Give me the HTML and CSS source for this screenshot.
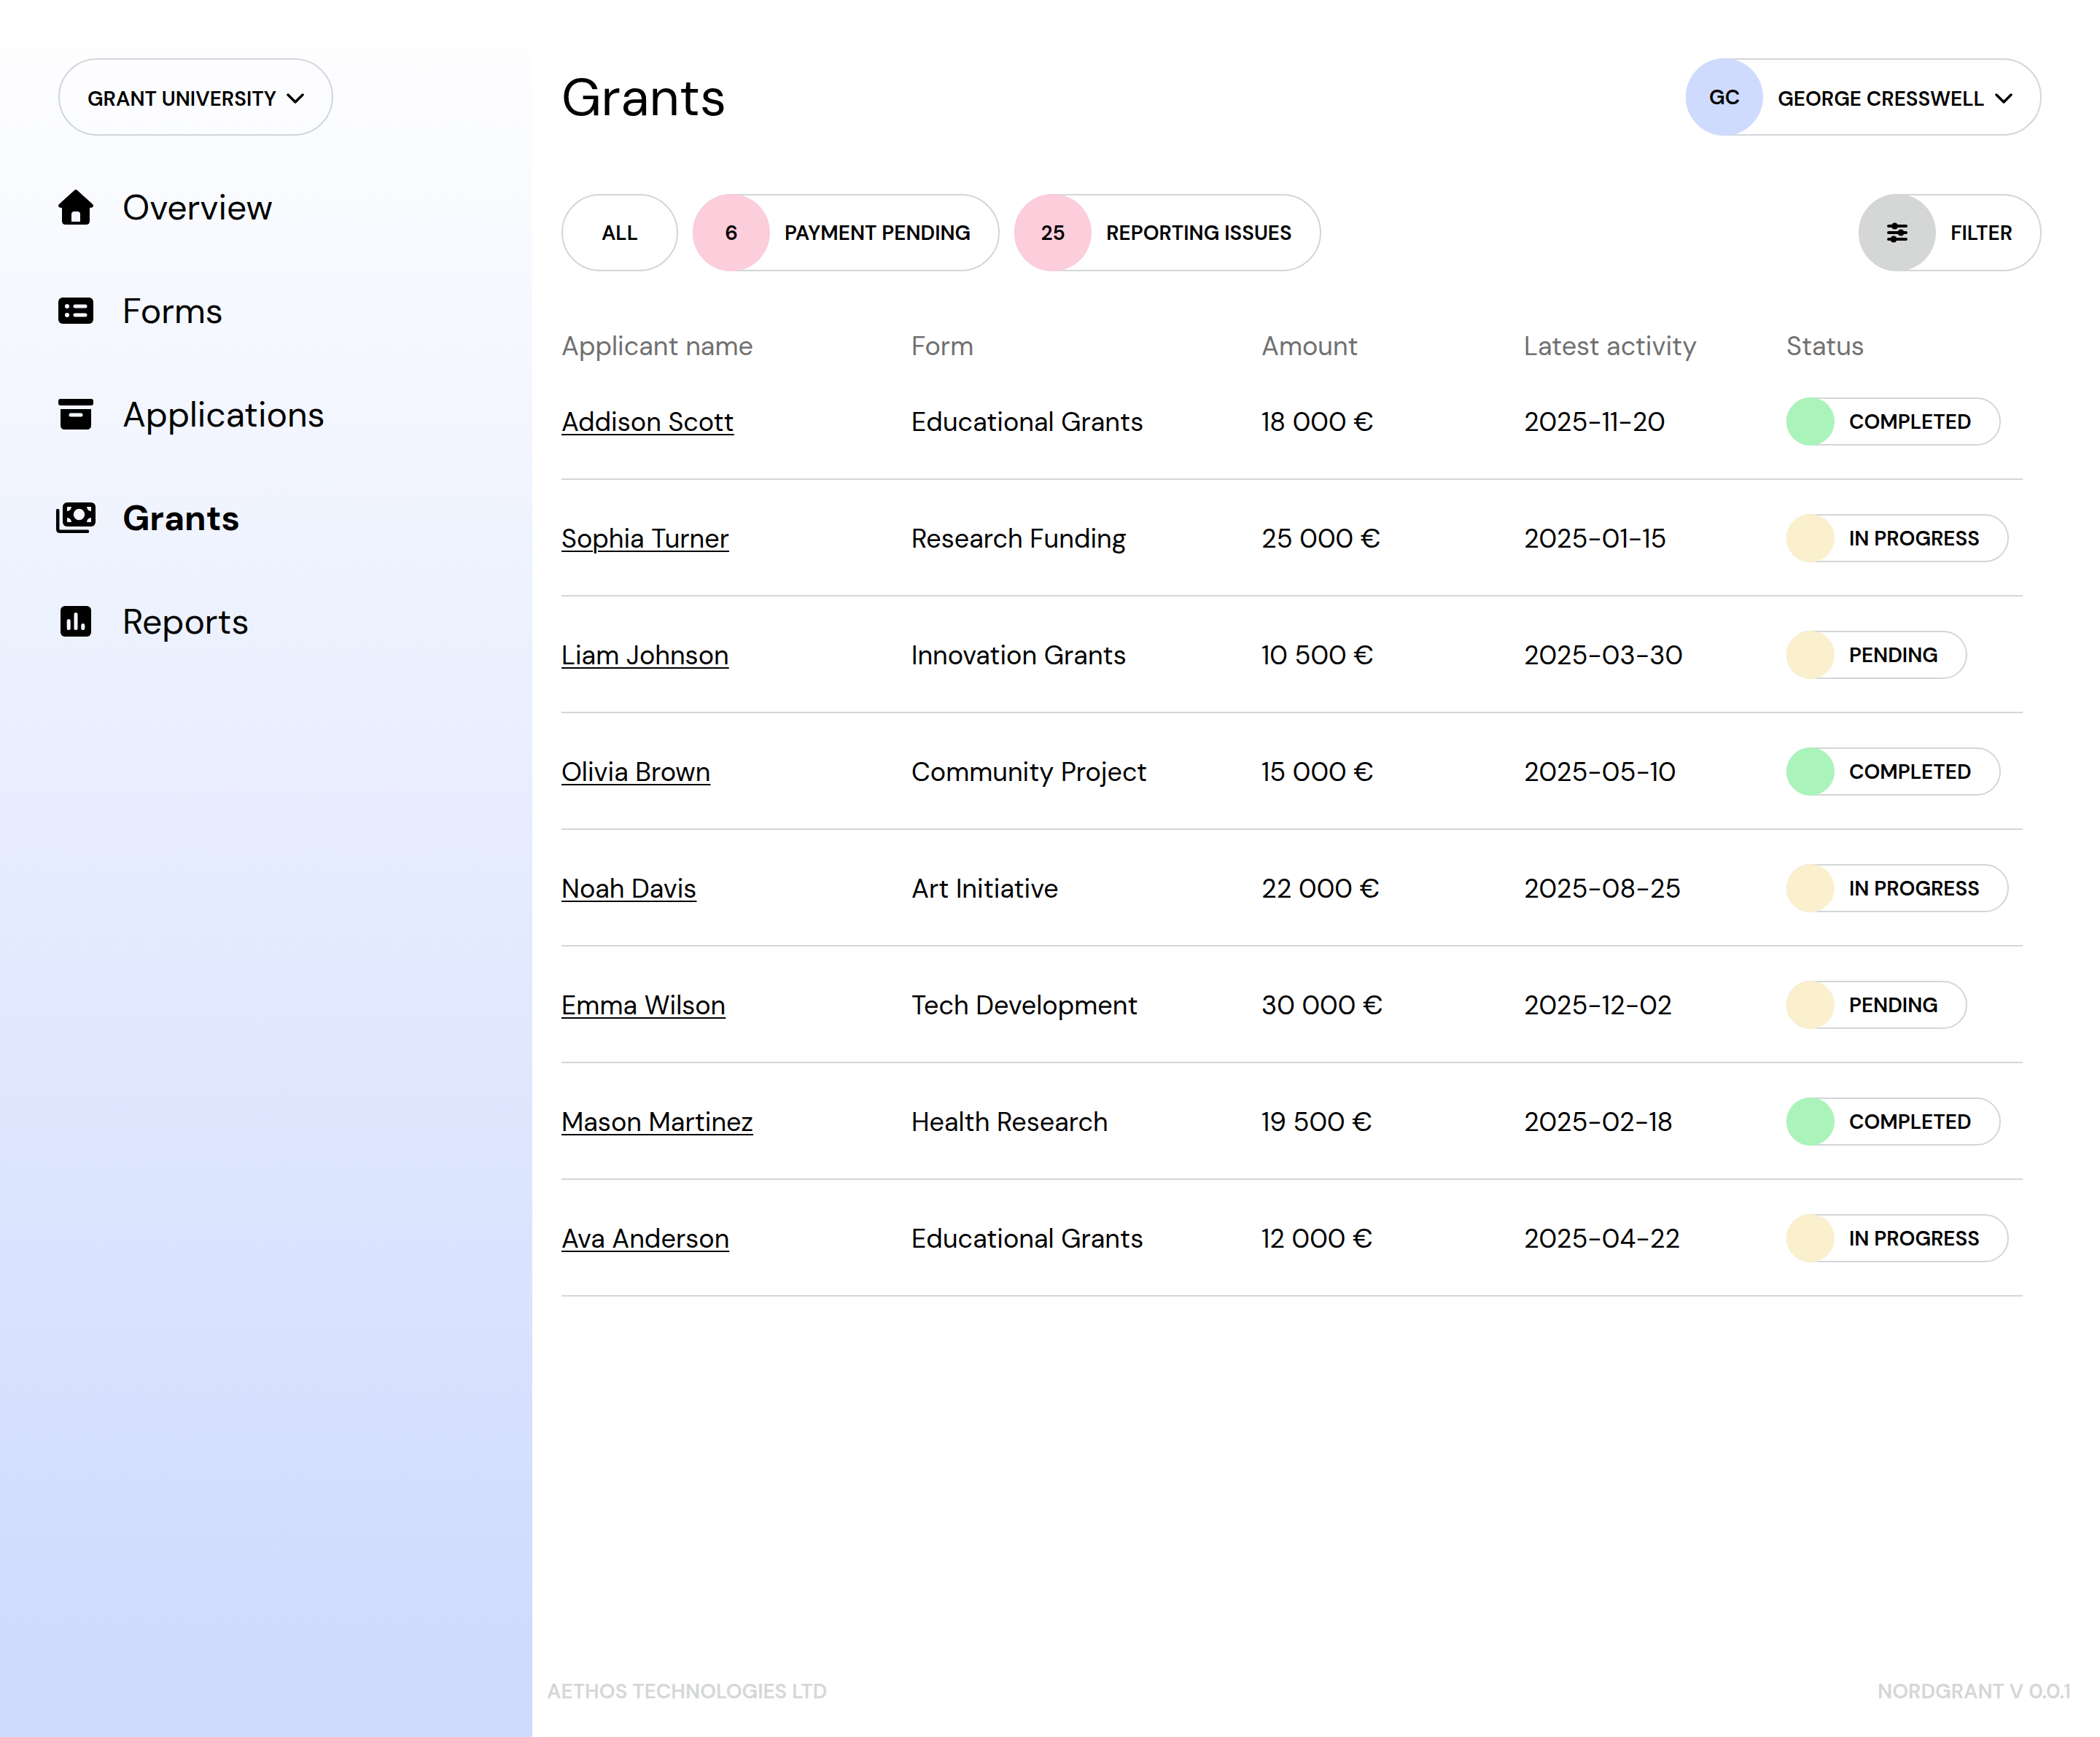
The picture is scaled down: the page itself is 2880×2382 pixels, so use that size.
FILE: index.html
```
<!DOCTYPE html>
<html lang="en">
<head>
    <meta charset="UTF-8">
    <meta name="viewport" content="width=device-width, initial-scale=1.0">
    <title>Grants</title>
    <link rel="stylesheet" href="styles.css">
</head>
<body>
    <div class="app">
        <aside class="sidebar">
            <label class="pill pill-menu">
                <select aria-label="Organisation">
                    <option>GRANT UNIVERSITY</option>
                </select>
                <svg class="chevron" viewBox="0 0 24 14"><path d="M2 2l10 10L22 2"/></svg>
            </label>
            <nav class="nav">
                <a href="#">
                    <svg class="icon" viewBox="0 0 48 48">
                        <path d="M22 1Q24-1 26 1L47 20Q49 22 47 24Q46 25 43 25V43Q43 48 38 48H10Q5 48 5 43V25Q2 25 1 24Q-1 22 1 20Z"/>
                        <path class="cut" d="M18 44V34Q18 30 22 30H26Q30 30 30 34V44Z"/>
                    </svg>
                    Overview
                </a>
                <a href="#">
                    <svg class="icon" viewBox="0 0 48 48">
                        <rect y="6" width="48" height="36" rx="6"/>
                        <circle class="cut" cx="12" cy="18" r="3"/>
                        <circle class="cut" cx="12" cy="30" r="3"/>
                        <path class="cut-line" d="M23 18H37M23 30H37"/>
                    </svg>
                    Forms
                </a>
                <a href="#">
                    <svg class="icon" viewBox="0 0 48 48">
                        <rect y="3" width="48" height="9" rx="3"/>
                        <path d="M3 17H45V39Q45 45 39 45H9Q3 45 3 39Z"/>
                        <path class="cut-line" d="M17 25H31"/>
                    </svg>
                    Applications
                </a>
                <a href="#" class="active" aria-current="page">
                    <svg class="icon" viewBox="0 0 48 48">
                        <rect x="6" y="3" width="45" height="33" rx="6"/>
                        <circle class="cut" cx="28.5" cy="19.5" r="7.7"/>
                        <path class="cut" d="M12 9H18Q17.500 14.500 12 15ZM45 9H39Q39.500 14.500 45 15ZM12 30H18Q17.500 24.500 12 24ZM45 30H39Q39.500 24.500 45 24Z"/>
                        <path class="line" d="M-.8 14V39.500Q-.8 42.800 2.500 42.800H40"/>
                    </svg>
                    Grants
                </a>
                <a href="#">
                    <svg class="icon" viewBox="0 0 48 48">
                        <rect x="3" y="3" width="42" height="42" rx="6"/>
                        <path class="cut-line" d="M14.200 23.500V33.500M24 14.500V33.500M33.800 29.500V33.500"/>
                    </svg>
                    Reports
                </a>
            </nav>
        </aside>

        <main class="main">
            <header class="topbar">
                <h1>Grants</h1>
                <button type="button" class="pill pill-menu">
                    <span class="circle blue">GC</span>
                    <span class="name">GEORGE CRESSWELL</span>
                    <svg class="chevron" viewBox="0 0 24 14"><path d="M2 2l10 10L22 2"/></svg>
                </button>
            </header>

            <div class="toolbar">
                <button type="button" class="pill pill-all">ALL</button>
                <button type="button" class="pill"><span class="circle pink">6</span>PAYMENT PENDING</button>
                <button type="button" class="pill"><span class="circle pink">25</span>REPORTING ISSUES</button>
                <button type="button" class="pill filter">
                    <span class="circle grey">
                        <svg class="sliders" viewBox="0 0 28 28">
                            <path d="M2 5H26M2 14H26M2 23H26"/>
                            <circle cx="10.500" cy="5" r="4.500"/>
                            <circle cx="19" cy="14" r="4.500"/>
                            <circle cx="9" cy="23" r="4.500"/>
                        </svg>
                    </span>
                    FILTER
                </button>
            </div>

            <div class="table-wrap">
                <table>
                    <thead>
                        <tr>
                            <th class="wide">Applicant name</th>
                            <th class="wide">Form</th>
                            <th class="medium">Amount</th>
                            <th class="medium">Latest activity</th>
                            <th>Status</th>
                        </tr>
                    </thead>
                    <tbody>
                        <tr>
                            <td><a href="#">Addison Scott</a></td>
                            <td>Educational Grants</td>
                            <td>18 000 €</td>
                            <td>2025-11-20</td>
                            <td><span class="status"><span class="dot green"></span>COMPLETED</span></td>
                        </tr>
                        <tr>
                            <td><a href="#">Sophia Turner</a></td>
                            <td>Research Funding</td>
                            <td>25 000 €</td>
                            <td>2025-01-15</td>
                            <td><span class="status"><span class="dot yellow"></span>IN PROGRESS</span></td>
                        </tr>
                        <tr>
                            <td><a href="#">Liam Johnson</a></td>
                            <td>Innovation Grants</td>
                            <td>10 500 €</td>
                            <td>2025-03-30</td>
                            <td><span class="status"><span class="dot yellow"></span>PENDING</span></td>
                        </tr>
                        <tr>
                            <td><a href="#">Olivia Brown</a></td>
                            <td>Community Project</td>
                            <td>15 000 €</td>
                            <td>2025-05-10</td>
                            <td><span class="status"><span class="dot green"></span>COMPLETED</span></td>
                        </tr>
                        <tr>
                            <td><a href="#">Noah Davis</a></td>
                            <td>Art Initiative</td>
                            <td>22 000 €</td>
                            <td>2025-08-25</td>
                            <td><span class="status"><span class="dot yellow"></span>IN PROGRESS</span></td>
                        </tr>
                        <tr>
                            <td><a href="#">Emma Wilson</a></td>
                            <td>Tech Development</td>
                            <td>30 000 €</td>
                            <td>2025-12-02</td>
                            <td><span class="status"><span class="dot yellow"></span>PENDING</span></td>
                        </tr>
                        <tr>
                            <td><a href="#">Mason Martinez</a></td>
                            <td>Health Research</td>
                            <td>19 500 €</td>
                            <td>2025-02-18</td>
                            <td><span class="status"><span class="dot green"></span>COMPLETED</span></td>
                        </tr>
                        <tr>
                            <td><a href="#">Ava Anderson</a></td>
                            <td>Educational Grants</td>
                            <td>12 000 €</td>
                            <td>2025-04-22</td>
                            <td><span class="status"><span class="dot yellow"></span>IN PROGRESS</span></td>
                        </tr>
                    </tbody>
                </table>
            </div>

            <footer class="footer">
                <span>AETHOS TECHNOLOGIES LTD</span>
                <span>NORDGRANT V 0.0.1</span>
            </footer>
        </main>
    </div>
</body>
</html>
```
FILE: styles.css
```
* {
    box-sizing: border-box;
}
body {
    margin: 0;
    font-family: "DM Sans", Inter, sans-serif;
    font-size: 36px;
    color: #000;
    background-color: #fff;
}
a {
    color: inherit;
}
.app {
    display: flex;
    min-height: 100vh;
}

/* Sidebar */
.sidebar {
    flex: 0 0 730px;
    padding: 80px;
    background: linear-gradient(#fff, #cfdbfe 95%);
}
.nav {
    display: flex;
    flex-direction: column;
    gap: 82px;
    margin-top: 68px;
}
.nav a {
    display: flex;
    align-items: center;
    gap: 40px;
    height: 60px;
    font-size: 48px;
    text-decoration: none;
}
.nav .active {
    font-weight: 700;
}
.icon {
    width: 48px;
    height: 48px;
    overflow: visible;
}
.icon .cut {
    fill: #f4f7ff;
}
.icon .cut-line {
    fill: none;
    stroke: #f4f7ff;
    stroke-width: 5;
    stroke-linecap: round;
}
.icon .line {
    fill: none;
    stroke: #000;
    stroke-width: 4.5;
    stroke-linecap: round;
}

/* Pills */
.pill {
    display: inline-flex;
    align-items: center;
    gap: 20px;
    height: 106px;
    padding: 0 38px 0 0;
    border: 2px solid #d3d6d9;
    border-radius: 53px;
    background: none;
    font-family: inherit;
    font-size: 28px;
    font-weight: 600;
    color: #000;
    white-space: nowrap;
    cursor: pointer;
}
.pill select {
    padding: 4px 0 0;
    border: none;
    background: none;
    font: inherit;
    color: inherit;
    appearance: none;
    cursor: pointer;
}
.pill .name {
    padding-top: 4px;
}
.pill-menu .chevron {
    margin-left: -6px;
}
.sidebar .pill {
    padding-left: 38px;
}
.pill-all {
    justify-content: center;
    min-width: 160px;
    padding: 0 38px;
}
.chevron {
    width: 24px;
    height: 14px;
    margin-top: 4px;
    fill: none;
    stroke: #000;
    stroke-width: 3.5;
    stroke-linecap: round;
    stroke-linejoin: round;
    pointer-events: none;
}
.circle {
    display: flex;
    align-items: center;
    justify-content: center;
    width: 106px;
    height: 106px;
    margin: -2px 0 -2px -2px;
    border-radius: 50%;
}
.blue {
    background-color: #cfdbfe;
}
.pink {
    background-color: #fccddb;
}
.grey {
    background-color: #d5d7d6;
}
.green {
    background-color: #aaf4bb;
}
.yellow {
    background-color: #fbf0ce;
}
.sliders {
    width: 28px;
    height: 28px;
    stroke: #000;
    stroke-linecap: round;
}
.sliders path {
    stroke-width: 4;
}
.sliders circle {
    stroke: none;
}

/* Main */
.main {
    flex: 1;
    min-width: 0;
    display: flex;
    flex-direction: column;
}
.topbar {
    display: flex;
    align-items: center;
    justify-content: space-between;
    padding: 80px 80px 0 40px;
}
h1 {
    margin: 0;
    font-size: 72px;
    font-weight: 400;
}
.toolbar {
    display: flex;
    gap: 20px;
    padding: 80px 80px 0 40px;
}
.filter {
    margin-left: auto;
}
.table-wrap {
    padding: 80px 106px 0 40px;
}
table {
    width: 100%;
    table-layout: fixed;
    border-spacing: 0;
}
th {
    height: 46px;
    padding: 0;
    font-weight: 400;
    line-height: 46px;
    text-align: left;
    color: #707070;
}
.wide {
    width: 480px;
}
.medium {
    width: 360px;
}
td {
    height: 160px;
    padding: 2px 0 0;
    border-bottom: 2px solid #d5d7d6;
}
td a {
    text-decoration-thickness: 2px;
    text-underline-offset: 4px;
}
.status {
    display: flex;
    align-items: center;
    gap: 20px;
    width: fit-content;
    height: 66px;
    padding-right: 38px;
    border: 2px solid #d3d6d9;
    border-radius: 33px;
    font-size: 28px;
    font-weight: 600;
    white-space: nowrap;
}
.dot {
    width: 66px;
    height: 66px;
    margin-left: -2px;
    border-radius: 50%;
}

.footer {
    display: flex;
    justify-content: space-between;
    margin-top: auto;
    padding: 40px 40px 44px 20px;
    font-size: 28px;
    font-weight: 600;
    color: #d5d7d6;
}
```
